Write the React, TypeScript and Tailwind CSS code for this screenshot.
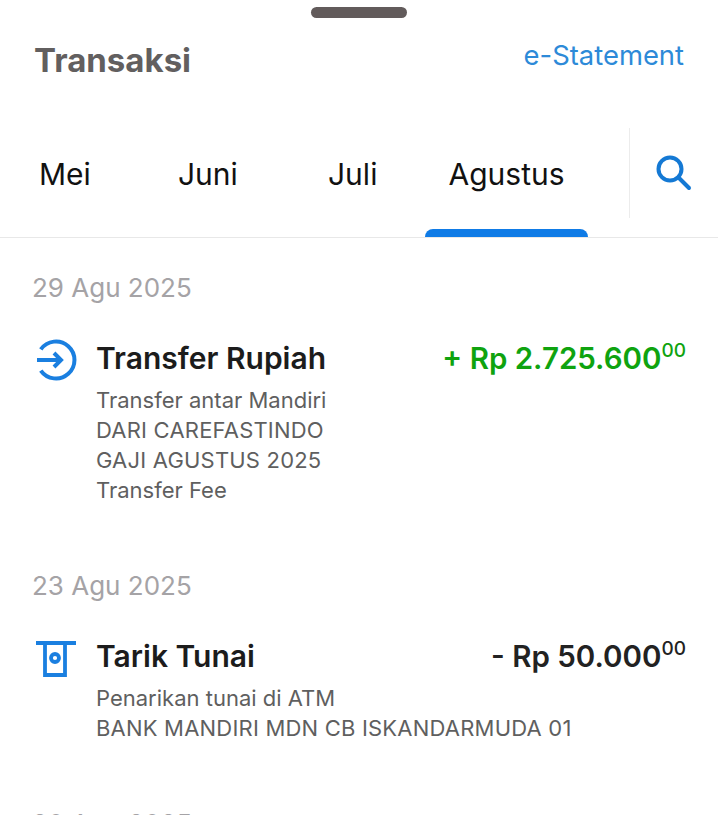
const tabs = [
  { label: "Mei", width: "w-[139px]" },
  { label: "Juni", width: "w-[150px]" },
  { label: "Juli", width: "w-[140px]" },
];

const ArrowInIcon = () => (
  <svg width="44" height="44" viewBox="0 0 44 44" fill="none" stroke="#1a7fe0" strokeWidth="4">
    <path d="M6.8 11.4A18.5 18.5 0 1 1 6.8 32.6" />
    <path d="M3 22H27" />
    <path d="M20 15L27 22L20 29" />
  </svg>
);

const AtmIcon = () => (
  <svg width="44" height="44" viewBox="0 0 44 44" fill="none" stroke="#1a7fe0" strokeWidth="3.8">
    <path d="M2 7H42" />
    <path d="M11 7V39H31V7" />
    <circle cx="21" cy="22" r="4" />
  </svg>
);

const SearchIcon = () => (
  <svg width="38" height="38" viewBox="0 0 38 38" fill="none" stroke="#1479d4" strokeWidth="4">
    <circle cx="15" cy="15" r="11.5" />
    <path d="M23.5 23.5L34 34" strokeLinecap="round" />
  </svg>
);

const Transaction = ({ date, icon, title, amount, amountColor, lines }: {
  date: string;
  icon: React.ReactNode;
  title: string;
  amount: string;
  amountColor: string;
  lines: string[];
}) => (
  <div className="mb-[64px]">
    <p className="text-[26px] leading-[34px] text-[#a5a3a6]">{date}</p>
    <div className="flex mt-[33px] pl-[2px] pr-[32px]">
      <div className="w-[62px] shrink-0">{icon}</div>
      <div className="flex-1">
        <div className="flex justify-between items-start">
          <p className="text-[30px] leading-[40px] font-semibold text-[#1c1c1c]">{title}</p>
          <p className={`text-[29.5px] leading-[40px] font-semibold ${amountColor}`}>
            {amount}
            <span className="text-[19px] font-medium align-[12px] leading-none">00</span>
          </p>
        </div>
        <div className="mt-[7px] text-[22px] leading-[30px] text-[#5f5f5f]">
          {lines.map((l) => (
            <p key={l} className={l === l.toUpperCase() ? "tracking-[0.2px]" : ""}>{l}</p>
          ))}
        </div>
      </div>
    </div>
  </div>
);

export default function App() {
  return (
    <div className="h-[815px] overflow-hidden bg-white font-['Inter',sans-serif]">
      <div className="flex justify-center pt-[7px]">
        <div className="w-[96px] h-[11px] rounded-full bg-[#625b5b]" />
      </div>
      <div className="flex justify-between items-start pl-[34px] pr-[34px] mt-[22px]">
        <h1 className="text-[33px] leading-[40px] font-bold text-[#625f5f]">Transaksi</h1>
        <a className="text-[27.4px] leading-[32px] text-[#2d8ad8] -mt-[1px]">e-Statement</a>
      </div>
      <div className="flex items-stretch h-[110px] mt-[48px] border-b border-[#e8e8e8]">
        <div className="flex flex-1 pl-[39px]">
          {tabs.map((t) => (
            <div key={t.label} className={`${t.width} pt-[26px] text-[30px] leading-[40px] text-[#111]`}>
              {t.label}
            </div>
          ))}
          <div className="w-[163px] -ml-[43px] pt-[26px] text-center text-[30px] leading-[40px] text-[#111] relative">
            Agustus
            <div className="absolute bottom-0 left-0 right-0 h-[8px] rounded-t-[8px] bg-[#0f7be6]" />
          </div>
        </div>
        <div className="w-[89px] h-[90px] border-l border-[#ececec] pl-[25px] pt-[26px]">
          <SearchIcon />
        </div>
      </div>
      <div className="pl-[32px] pt-[33px]">
        <Transaction
          date="29 Agu 2025"
          icon={<ArrowInIcon />}
          title="Transfer Rupiah"
          amount="+ Rp 2.725.600"
          amountColor="text-[#0fa30f]"
          lines={["Transfer antar Mandiri", "DARI CAREFASTINDO", "GAJI AGUSTUS 2025", "Transfer Fee"]}
        />
        <Transaction
          date="23 Agu 2025"
          icon={<AtmIcon />}
          title="Tarik Tunai"
          amount="- Rp 50.000"
          amountColor="text-[#222]"
          lines={["Penarikan tunai di ATM", "BANK MANDIRI MDN CB ISKANDARMUDA 01"]}
        />
        <p className="text-[26px] leading-[34px] text-[#a5a3a6]">20 Agu 2025</p>
      </div>
    </div>
  );
}
